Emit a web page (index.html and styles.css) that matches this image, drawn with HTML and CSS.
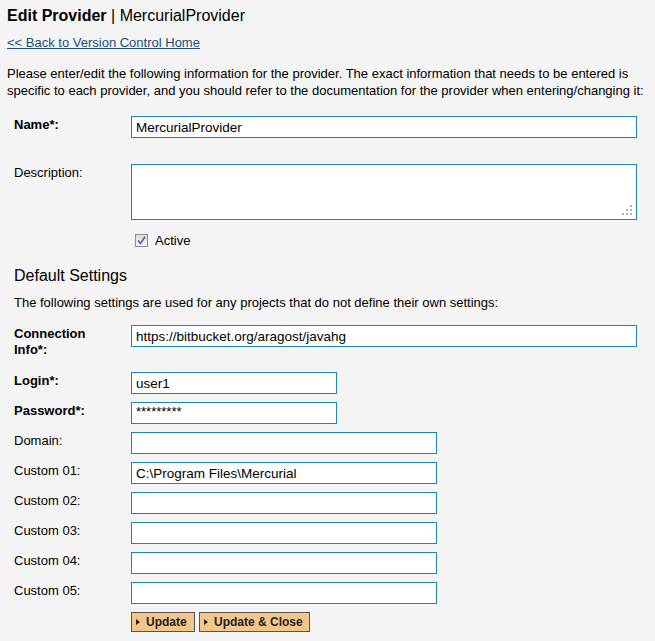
FILE: index.html
```html
<!DOCTYPE html>
<html>
<head>
<meta charset="utf-8">
<link rel="stylesheet" href="styles.css">
</head>
<body>
<div class="page">
  <h1 class="title"><b>Edit Provider</b> | MercurialProvider</h1>
  <a class="back" href="#">&lt;&lt; Back to Version Control Home</a>
  <p class="intro">Please enter/edit the following information for the provider. The exact information that needs to be entered is specific to each provider, and you should refer to the documentation for the provider when entering/changing it:</p>

  <div class="form">
    <label class="lbl req">Name*:</label>
    <div class="field"><input class="in full" type="text" value="MercurialProvider"></div>

    <label class="lbl desc-lbl">Description:</label>
    <div class="field desc-field">
      <div class="ta"><span class="grip"><i></i><i></i><i></i><i></i><i></i><i></i></span></div>
    </div>

    <div></div>
    <div class="field chk-row"><span class="chk"><svg width="9" height="9" viewBox="0 0 9 9"><path d="M1 4.5 L3.5 7.5 L8 0.8" fill="none" stroke="#4a5fa8" stroke-width="1.6"/></svg></span><span>Active</span></div>
  </div>

  <h2 class="sub">Default Settings</h2>
  <p class="intro2">The following settings are used for any projects that do not define their own settings:</p>

  <div class="form form2">
    <label class="lbl req">Connection Info*:</label>
    <div class="field"><input class="in full" type="text" value="https://bitbucket.org/aragost/javahg"></div>

    <label class="lbl req after-conn">Login*:</label>
    <div class="field after-conn"><input class="in short" type="text" value="user1"></div>

    <label class="lbl req">Password*:</label>
    <div class="field"><input class="in short pw" type="text" value="*********"></div>

    <label class="lbl">Domain:</label>
    <div class="field"><input class="in mid" type="text" value=""></div>

    <label class="lbl">Custom 01:</label>
    <div class="field"><input class="in mid" type="text" value="C:\Program Files\Mercurial"></div>

    <label class="lbl">Custom 02:</label>
    <div class="field"><input class="in mid" type="text" value=""></div>

    <label class="lbl">Custom 03:</label>
    <div class="field"><input class="in mid" type="text" value=""></div>

    <label class="lbl">Custom 04:</label>
    <div class="field"><input class="in mid" type="text" value=""></div>

    <label class="lbl">Custom 05:</label>
    <div class="field"><input class="in mid" type="text" value=""></div>

    <div></div>
    <div class="field btns">
      <button class="btn btn-update"><span class="tri"></span>Update</button>
      <button class="btn btn-close"><span class="tri"></span>Update &amp; Close</button>
    </div>
  </div>
</div>
</body>
</html>
```

FILE: styles.css
```css
html, body {
  margin: 0;
  padding: 0;
  background: #f4f4f4;
}
body {
  font-family: "Liberation Sans", Arial, sans-serif;
  font-size: 13px;
  color: #000;
}
.page {
  padding: 6px 7px 0 7px;
}
.title {
  font-size: 16px;
  font-weight: normal;
  margin: 0;
  line-height: 20px;
  height: 20px;
}
.title b { font-weight: bold; }
.back {
  display: block;
  width: max-content;
  margin-top: 9px;
  font-size: 13px;
  line-height: 15px;
  color: #1c4e80;
  text-decoration: underline;
}
.intro {
  margin: 15px 0 0 0;
  line-height: 17px;
}
.form {
  display: grid;
  grid-template-columns: 124px 1fr;
  margin-top: 17px;
  row-gap: 8px;
}
.lbl {
  padding: 1px 12px 0 7px;
  line-height: 16px;
}
.req { font-weight: bold; }
.field { display: flex; align-items: flex-start; }
.in {
  box-sizing: border-box;
  height: 22px;
  border: 1px solid #1a87b4;
  background: #fff;
  font-family: "Liberation Sans", Arial, sans-serif;
  font-size: 13.5px;
  padding: 0 4px;
  margin: 0;
  color: #000;
  outline: none;
}
.full { width: 506px; }
.short { width: 206px; }
.mid { width: 306px; }
.pw { font-size: 13px; padding-bottom: 4px; }
.desc-lbl, .desc-field { margin-top: 18px; }
.ta {
  box-sizing: border-box;
  width: 506px;
  height: 56px;
  border: 1px solid #1a87b4;
  background: #fff;
  position: relative;
}
.grip {
  position: absolute;
  right: 4px;
  bottom: 4px;
  width: 10px;
  height: 10px;
}
.grip i {
  position: absolute;
  width: 2px;
  height: 2px;
  background: #b4b4b4;
}
.grip i:nth-child(1) { right: 0; top: 0; }
.grip i:nth-child(2) { right: 0; top: 4px; }
.grip i:nth-child(3) { right: 0; top: 8px; }
.grip i:nth-child(4) { right: 4px; top: 4px; }
.grip i:nth-child(5) { right: 4px; top: 8px; }
.grip i:nth-child(6) { right: 8px; top: 8px; }
.chk-row {
  align-items: center;
  margin-top: 5px;
  padding-left: 4px;
  height: 14px;
}
.chk {
  box-sizing: border-box;
  width: 13px;
  height: 13px;
  border: 1px solid #8f8f8f;
  background: linear-gradient(#dcdcdc, #f6f6f6);
  display: inline-flex;
  align-items: center;
  justify-content: center;
  margin-right: 7px;
}
.sub {
  font-size: 16px;
  font-weight: normal;
  margin: 19px 0 0 7px;
  line-height: 20px;
}
.intro2 {
  margin: 8px 0 0 7px;
  line-height: 17px;
}
.form2 { margin-top: 14px; }
.after-conn { margin-top: 6px; }
.btns { gap: 4px; }
.btn {
  box-sizing: border-box;
  height: 20px;
  border: 1px solid #555;
  background: #f5c68a;
  font-family: "Liberation Sans", Arial, sans-serif;
  font-size: 12px;
  font-weight: bold;
  color: #222;
  padding: 0 0 0 4px;
  display: inline-flex;
  align-items: center;
  white-space: nowrap;
  overflow: hidden;
  margin: 0;
}
.btn-update { width: 64px; }
.btn-close { width: 111px; }
.tri {
  flex: none;
  width: 0;
  height: 0;
  border-left: 4px solid #222;
  border-top: 3px solid transparent;
  border-bottom: 3px solid transparent;
  margin-right: 6px;
}
```
